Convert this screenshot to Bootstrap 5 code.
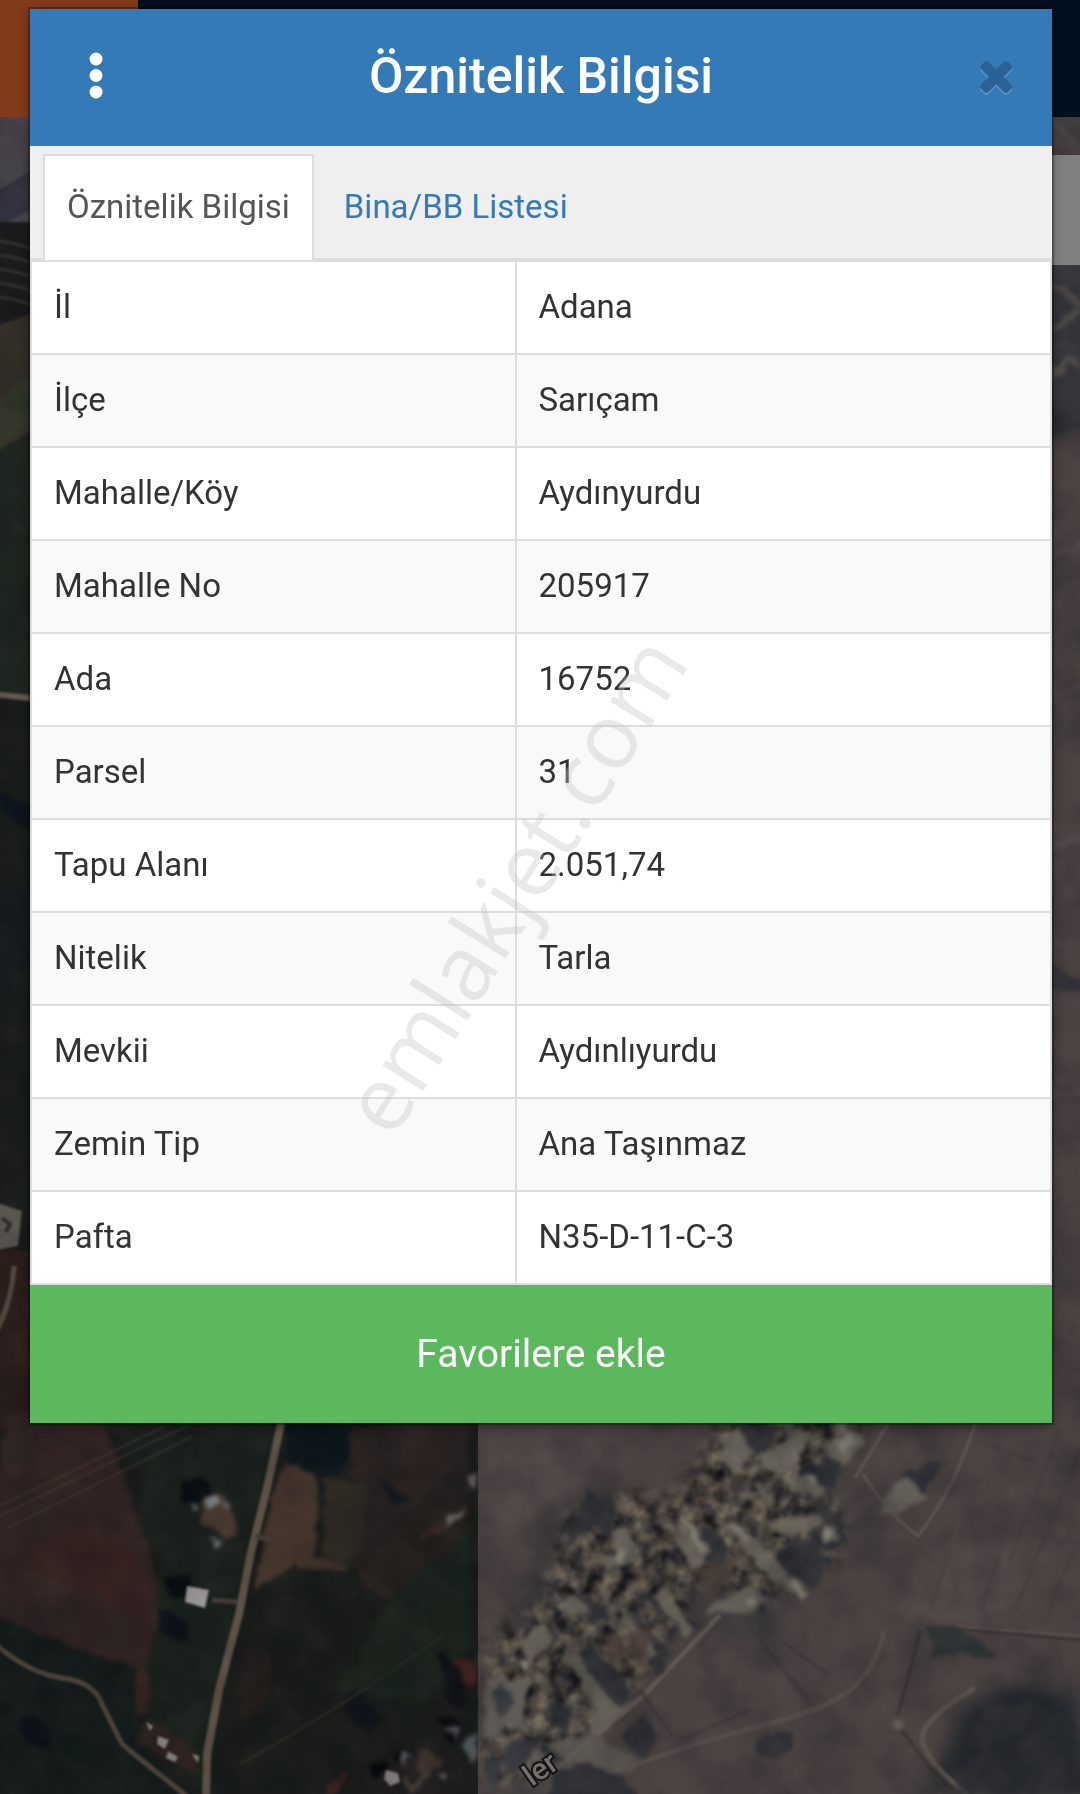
<!DOCTYPE html>
<html lang="tr">
<head>
<meta charset="utf-8">
<meta name="viewport" content="width=device-width, initial-scale=1">
<title>Öznitelik Bilgisi</title>
<link href="https://cdn.jsdelivr.net/npm/bootstrap@5.3.0/dist/css/bootstrap.min.css" rel="stylesheet">
<style>
  body { font-family: Roboto, "Liberation Sans", sans-serif; font-size: 33px; line-height: 47px; color: #333; background: #2a2625; min-height: 100vh; }
  .map-layer { z-index: 0; }
  .site-bar { height: 117px; background: #000f1e; z-index: 1; }
  .site-brand { width: 138px; background: #813a1b; }
  .map-tool { top: 155px; width: 60px; height: 110px; background: #808080; z-index: 1; }
  .info-shell { z-index: 2; padding: 9px 28px 0 30px; }
  .info-panel { box-shadow: 0 0 0 2px rgba(0,0,0,.25), 0 4px 10px rgba(0,0,0,.4); }
  .info-head { height: 137px; background: #347ab6; padding: 0 38px; }
  .info-head h1 { font-size: 50px; font-weight: 500; line-height: 60px; color: #fff; padding-bottom: 4px; }
  .head-btn { width: 40px; height: 60px; padding: 0; border: 0; }
  .tab-strip { background: #efefef; padding: 8px 13px 0; border-bottom: 2px solid #ddd; }
  .tab-strip .nav-link { color: #337ab7; border: 2px solid transparent; border-bottom: 0; border-radius: 0; padding: 27px 22px 30px; line-height: 47px; margin: 0 6px -2px 0; }
  .tab-strip .nav-link.active { color: #555; background: #fff; border-color: #ddd; }
  .info-table { color: #333; border: 2px solid #ddd; }
  .info-table th, .info-table td { border: 0 solid #ddd; border-bottom-width: 2px; padding: 21px 22px 23px; height: 93px; line-height: 47px; font-weight: 400; text-align: left; }
  .info-table th { width: 47.5%; border-right-width: 2px; }
  .info-table tr:nth-child(even) { background: #f9f9f9; }
  .fav-btn { background: #5cb85c; color: #fff; border: 0; border-radius: 0; font-size: 39px; line-height: 50px; padding: 44px 20px; }
  .fav-btn:hover { background: #4fa84f; color: #fff; }
  .stamp { z-index: 3; top: 49.2%; left: 47.4%; font-family: "Open Sans", "Noto Sans", sans-serif; font-size: 90px; line-height: 1; color: rgba(195,195,195,.36); transform: translate(-50%, -50%) rotate(-58deg); pointer-events: none; }
</style>
<script src="https://cdn.jsdelivr.net/npm/bootstrap@5.3.0/dist/js/bootstrap.bundle.min.js"></script>
</head>
<body class="position-relative overflow-hidden">

<svg class="map-layer position-absolute top-0 start-0 w-100 h-100" viewBox="0 0 1080 1794" preserveAspectRatio="xMidYMin slice" aria-hidden="true">
  <defs>
    <filter id="soft" x="-5%" y="-5%" width="110%" height="110%" color-interpolation-filters="sRGB">
      <feTurbulence type="fractalNoise" baseFrequency=".06" numOctaves="3" seed="3" result="n"/>
      <feDisplacementMap in="SourceGraphic" in2="n" scale="14" xChannelSelector="R" yChannelSelector="G"/>
      <feGaussianBlur stdDeviation="2"/>
    </filter>
    <filter id="lines" x="-5%" y="-5%" width="110%" height="110%" color-interpolation-filters="sRGB"><feGaussianBlur stdDeviation="1.3"/></filter>
    <filter id="haze" x="-30%" y="-30%" width="160%" height="160%" color-interpolation-filters="sRGB"><feGaussianBlur stdDeviation="8"/></filter>
    <filter id="town" x="-5%" y="-5%" width="110%" height="110%" color-interpolation-filters="sRGB">
      <feGaussianBlur in="SourceGraphic" stdDeviation="9" result="area"/>
      <feTurbulence type="fractalNoise" baseFrequency=".06" numOctaves="3" seed="9"/>
      <feColorMatrix values="1 0 0 0 -.21  .9 .05 0 0 -.21  .7 .05 .1 0 -.19  0 0 0 0 1"/>
      <feGaussianBlur stdDeviation="1.2"/>
      <feComposite in2="area" operator="in"/>
    </filter>
    <filter id="grain" x="0" y="0" width="100%" height="100%" color-interpolation-filters="sRGB">
      <feTurbulence type="fractalNoise" baseFrequency=".03" numOctaves="4" seed="6"/>
      <feColorMatrix values="0 0 0 0 .42  0 0 0 0 .38  0 0 0 0 .36  1.6 0 0 0 -.6"/>
    </filter>
    <filter id="shade" x="0" y="0" width="100%" height="100%" color-interpolation-filters="sRGB">
      <feTurbulence type="fractalNoise" baseFrequency=".02" numOctaves="4" seed="12"/>
      <feColorMatrix values="0 0 0 0 .04  0 0 0 0 .06  0 0 0 0 .09  1.6 0 0 0 -.65"/>
    </filter>
  </defs>
  <rect width="1080" height="1794" fill="#181c1a"/>
  <rect x="478" width="602" height="1794" fill="#4a4140"/>

  <!-- strip left of the panel -->
  <g filter="url(#lines)">
    <path d="M-9 110h49v117H-9z" fill="#47434a"/>
    <path d="M-9 195l49-30v40L-9 230z" fill="#30323e"/>
    <path d="M-9 222h49v85L-9 335z" fill="#1b1a1c"/>
    <path d="M-9 240q25 2 49 12M-9 254q25 2 49 12M-9 268q25 2 49 12M-9 282q25 2 49 12M-9 296q25 2 49 12" stroke="#34312f" stroke-width="3" fill="none"/>
    <path d="M-9 328l49-18v150L-9 530z" fill="#353027"/>
    <path d="M-9 407l49-39v40L-9 460z" fill="#32372a"/>
    <path d="M-9 455l49-30v270H-9z" fill="#1d251f"/>
    <path d="M-9 694l49 5" stroke="#65594c" stroke-width="6"/>
    <path d="M-9 786l49 29v20L-9 806z" fill="#0f161d"/>
    <path d="M-9 910q25-35 49-10t-49 110z" fill="#151b1f"/>
    <path d="M-9 1250h49v180H-9z" fill="#2a1e1b"/>
    <path d="M-9 1201l31 10-4 35-27 5z" fill="#5b5751"/>
    <path d="M2 1218l8 6-4 8" stroke="#2b2c2c" stroke-width="4" fill="none"/>
    <path d="M14 1266q-2 35-18 66" stroke="#544a3f" stroke-width="5" fill="none"/>
  </g>

  <!-- strip right of the panel -->
  <g filter="url(#soft)">
    <path d="M1045 265h50v160l-50 14z" fill="#34343a"/>
    <path d="M1052 120l28 30M1050 285l30 18M1050 330l30-20M1050 380q14-28 30-14" stroke="#524d4c" stroke-width="6" fill="none"/>
    <path d="M1045 960q14 14 50 20v18l-50-14z" fill="#303138"/>
    <path d="M1045 560l50-22M1045 700l50-20M1045 850l50-18M1045 1100l50-15" stroke="#52484a" stroke-width="7"/>
  </g>

  <!-- dark farmland -->
  <g filter="url(#soft)">
    <path d="M10 1414h90l18 48 30 84 12 40-5 80-7 47-11 2-2-46-150-9v-120z" fill="#312422"/>
    <path d="M30 1540q50-18 100 10l25 35-5 45q-60-50-120-60z" fill="#371f20" opacity=".6"/>
    <path d="M-15 1614l149 54-4 50 60 96H-15z" fill="#141b1a"/>
    <path d="M100 1414h176l-30 140-12 70-30 170-50-60-8-70 14-60-2-50-20-80z" fill="#1a211c"/>
    <path d="M285 1414h90l-45 70-10 10-28-8z" fill="#0c161b"/>
    <path d="M350 1430l118-16v80l-60 100-55 10 5-50z" fill="#292220"/>
    <path d="M285 1464l30 5 5 36-6 50 38 10-10 6-52-4-32 20-6 12 15-80z" fill="#44342b"/>
    <path d="M325 1480l44 2-12 88-35-10 2-30z" fill="#2e2922"/>
    <path d="M345 1560l110-90 13 20v50l-70 60z" fill="#231f1c"/>
    <path d="M254 1600l40-33 60 10 40 30-10 60-80 40-78 20z" fill="#181c19"/>
    <path d="M240 1650q40-20 25 60l-25 10z" fill="#261e1a" opacity=".8"/>
    <path d="M390 1600l80-70v120l-42 50-90-6z" fill="#1a221b"/>
    <path d="M374 1478q20 0 36 24l-12 6z" fill="#15191f"/>
    <ellipse cx="34" cy="1730" rx="20" ry="12" fill="#0c0f17" transform="rotate(40 34 1730)"/>
    <ellipse cx="172" cy="1626" rx="18" ry="11" fill="#0d1118" transform="rotate(30 172 1626)"/>
    <ellipse cx="362" cy="1711" rx="24" ry="11" fill="#10141a" transform="rotate(50 362 1711)"/>
  </g>
  <g filter="url(#lines)" fill="none">
    <path d="M0 1516l186-90M0 1506l165-80M8 1528l185-92" stroke="#463834" stroke-width="2" opacity=".6"/>
    <path d="M240 1764q100-55 205-130" stroke="#262720" stroke-width="3"/>
    <path d="M283 1414l-16 74-16 64-12 62-20 76-12 64-1 50" stroke="#5f5248" stroke-width="8"/>
    <path d="M-5 1644q35 30 67 34t40 26l20 40q30 25 70 56" stroke="#4b433b" stroke-width="5"/>
    <path d="M212 1600l26 2M256 1536l16 4" stroke="#453c37" stroke-width="5"/>
  </g>
  <g filter="url(#soft)">
    <path d="M182 1480l20-2 12 14-20 15-12-6z" fill="#0a0d12"/>
    <path d="M205 1497l18-5 10 20 5 22-14 3-22-17z" fill="#4c3c31"/>
    <path d="M205 1493l13 1 2 11-10 4zM190 1505l8 2-4 5zM209 1539l11 1-4 9zM224 1499l7 3-4 9z" fill="#7b7f80"/>
    <path d="M162 1576l30-2-6 20-12 4z" fill="#090c10"/>
    <path d="M140 1722l24 2 32 28 4 18-14-2-50-26z" fill="#2c211d"/>
    <path d="M440 1494l28-26 8 22-30 16z" fill="#23201f"/>
    <path d="M442 1519l20-14-2 12-16 12zM468 1475l8-4 0 14-5 8z" fill="#6a6561"/>
    <path d="M425 1535l20-18-5 14-24 15z" fill="#38261f"/>
    <path d="M448 1664l20-6 8 4v28l-12-6z" fill="#42201e"/>
    <path d="M436 1650l12 0 20 40-4 20-20-10z" fill="#0f1116"/>
    <path d="M330 1784l20-14-14 24-14 10z" fill="#3f2020"/>
    <path d="M464 1750l12-20v26l-6 7z" fill="#515a5d"/>
    <path d="M365 1770l40-20 24-14 38 26-2 42h-90z" fill="#1f1c1d"/>
    <path d="M420 1752l14 0 6 12-16 12-8-8z" fill="#3d3029"/>
    <path d="M370 1764l14-6 4 12-10 8zM400 1744l12 4-4 16-12-2zM440 1720l14-6 8 20-12 8z" fill="#07090d"/>
    <path d="M446 1726l13 3-5 10zM403 1750l9 3-7 16zM434 1773l12 0-4 7z" fill="#5c5d65"/>
    <path d="M402 1776l12 18M412 1790l18-18" stroke="#52483e" stroke-width="3"/>
  </g>
  <g filter="url(#lines)">
    <path d="M187 1586l22 4-4 18-20-6z" fill="#a09c9b"/>
    <path d="M146 1722l7 4-3 5zM158 1736l11 4-4 9-8-5zM168 1751l10 6-3 5-9-4zM192 1754l7 2-1 7z" fill="#85827f"/>
    <path d="M386 1770l12 3 2 9-10 4-6-7z" fill="#7b7876"/>
  </g>

  <!-- brown farmland with the village -->
  <g filter="url(#haze)">
    <path d="M555 1500l50-14 20 40 50 10 90 20 25 40-20 50-80-20-100 90-60 60-24-90 10-90z" fill="#3d3a3b"/>
    <path d="M720 1414h160l-40 70 6 60-50 20-70-60z" fill="#403e3e"/>
    <path d="M950 1740l30-50 60-5 40 10v99H930z" fill="#282c31"/>
    <path d="M492 1650l48 10 60 90-20 44h-88z" fill="#4c4846"/>
    <path d="M920 1560l90-20 20 60-60 30-70-10zM490 1440h120l-40 50-80 60z" fill="#524847"/>
  </g>
  <path filter="url(#town)" opacity=".7" d="M720 1414h145l-25 54-24 14 30 24-10 60-40 20-30 22-60-28-60 94-70 70-50 40h-40v-140l52-40 30-92 60-20 40 4 30-30z"/>
  <g filter="url(#lines)" fill="none">
    <path d="M978 1414q-20 70-60 122-30-22-55-62M894 1414l-39 64" stroke="#5e5351" stroke-width="3"/>
    <path d="M884 1630q-5 30-25 52t-70 36l-90 25-120 40" stroke="#564c49" stroke-width="5"/>
    <path d="M720 1615l-76 80-84 70" stroke="#5f5652" stroke-width="5"/>
    <path d="M1080 1640l-130-12M895 1725q20-70 25-95M900 1728l50 66" stroke="#393433" stroke-width="3"/>
    <path d="M1080 1636l-130-10" stroke="#5b5250" stroke-width="2"/>
    <path d="M975 1688q-60 35-52 56 10 25 45 50" stroke="#5c514c" stroke-width="5"/>
    <path d="M740 1615l72 90M640 1690l32 45M780 1640l50 36M680 1740l70-30" stroke="#3f393a" stroke-width="3"/>
    <path d="M1080 1450l-65 160M1060 1430l-50 130M1078 1540l-30 70M975 1440l60 22" stroke="#433d3d" stroke-width="3"/>
    <path d="M960 1520l-30 90M1020 1500l-40 110" stroke="#4d4443" stroke-width="5"/>
  </g>
  <g filter="url(#soft)">
    <path d="M925 1626l28-2 45 28-15 6-50-3z" fill="#2c3233"/>
    <path d="M955 1760l20-50 40-16 50 6 30 94H960z" fill="#23282e" opacity=".7"/>
    <ellipse cx="775" cy="1744" rx="20" ry="13" fill="#303037" transform="rotate(-15 775 1744)"/>
    <g fill="#2b2d34" opacity=".85">
      <path d="M738 1424h50l-30 34-10-4zM805 1470l35-16-4 30-30 20zM700 1524l30 20-8 40-20-30zM820 1500l26 25-8 26-36-20zM770 1550l44-12 20 20-20 32-36-25z"/>
      <path d="M590 1490l24 12 4 40-24-14-36 20zM575 1600l14-4 18 22-14 12zM612 1600l60 54-12 18zM590 1640l40 50-12 28-40-50zM640 1586l60 38-8 14-44-30zM900 1474l40-14-20 40-18 16z"/>
      <path d="M540 1630l22 6-10 16-20-10zM552 1700l24 6-8 28-20-14zM620 1730l24-14 14 24-20 22zM540 1746l24-6 4 20-22 10z"/>
    </g>
    <g fill="#6c675d" opacity=".85">
      <path d="M725 1434l18-6 10 24-18 26-14-14zM764 1456l36-28 12 12-30 34-20-4zM828 1440l24-12 10 14-18 24-16-6z"/>
      <path d="M675 1518l10-5 28 38-14 16-20-20zM724 1524l10-4 60 58-4 16-30-24zM785 1580l12-3 12 18-10 4zM715 1600l40-10 12 10-14 14-44-2z"/>
      <path d="M654 1594l10-2 32 40-10 8zM612 1606l12 2 34 46-8 6zM566 1658l8-6 44 56-14 10zM562 1595l14-4 12 22-14 6z"/>
      <path d="M612 1530l12-3 12 18-8 16-22 10-4-10 14-10zM892 1484l16-6 22 18-26 16-26 4zM822 1532l12-4 4 10-10 6zM750 1484l8-2 18 20-6 4z"/>
      <path d="M795 1482l14-6 18 12-12 10zM764 1522l56-8 4 12-36 10zM590 1714l40-14-20 28-20 14z"/>
      <path d="M893 1716l14 4-6 10-10-4zM520 1640l20-15 14 14-22 22z"/>
    </g>
    <path d="M545 1742l50-8 44 28-8 10-70-10z" fill="#5f5a54" opacity=".8"/>
    <g fill="#858074">
      <path d="M680 1516l6 2 24 34-6 6zM788 1582l8-2 8 14-6 4zM834 1440l16-8 4 10-14 12zM806 1478l8-2 4 6-8 4zM728 1524l6 0 12 14-4 3zM616 1552l8-2-2 12-7 2zM746 1598l12 2-4 8-8-2zM584 1718l6-1-2 8zM824 1533l8-1 1 8-6 2z"/>
    </g>
    <g fill="#4e403a" opacity=".8">
      <path d="M700 1570l38-12-22 44-16-12zM604 1628l20 10-4 30-14-14zM730 1476l16 4-8 14-10-6zM640 1620l10 10-8 40-20-18z"/>
    </g>
    <path d="M484 1700l14-30 10 10 24-10-8 40 10 30-20-14-30 16z" fill="#625c57"/>
    <path d="M492 1690l10-8 12 20-14 18zM510 1740l20 6-6 28-20-6zM488 1752l12 10-6 30-8-10z" fill="#373b42"/>
    <path d="M520 1655l10 6-6 8zM506 1724l10 2-4 8z" fill="#8c887e"/>
    <path d="M555 1775l30-14 40 20 20 23H545z" fill="#292c32"/>
  </g>
  <rect width="478" height="1794" filter="url(#grain)" opacity=".12"/>
  <rect x="478" width="602" height="1794" filter="url(#grain)" opacity=".22"/>
  <rect width="1080" height="1794" filter="url(#shade)" opacity=".3"/>
  <text x="532" y="1787" transform="rotate(-35 532 1787)" font-family="Roboto, sans-serif" font-size="30" font-weight="500" fill="#74706e" stroke="#151313" stroke-width="4" paint-order="stroke">ler</text>
</svg>

<div class="site-bar position-absolute top-0 start-0 w-100 d-flex"><div class="site-brand"></div></div>
<div class="map-tool position-absolute end-0"></div>

<main class="info-shell position-relative">
  <section class="info-panel bg-white" aria-labelledby="panelTitle">
    <header class="info-head d-flex align-items-center justify-content-between">
      <button type="button" class="head-btn btn d-flex" aria-label="Menü">
        <svg width="40" height="60" viewBox="0 0 40 60" fill="#fff" aria-hidden="true"><circle cx="28" cy="11" r="6.5"/><circle cx="28" cy="27.500" r="6.5"/><circle cx="28" cy="44" r="6.5"/></svg>
      </button>
      <h1 id="panelTitle" class="m-0">Öznitelik Bilgisi</h1>
      <button type="button" class="head-btn btn d-flex" aria-label="Kapat">
        <svg width="40" height="60" viewBox="0 0 40 60" aria-hidden="true">
          <defs><path id="cross" d="M1490 1322q0 40-28 68l-136 136q-28 28-68 28t-68-28l-294-294-294 294q-28 28-68 28t-68-28l-136-136q-28-28-28-68t28-68l294-294-294-294q-28-28-28-68t28-68l136-136q28-28 68-28t68 28l294 294 294-294q28-28 68-28t68 28l136 136q28 28 28 68t-28 68l-294 294 294 294q28 28 28 68z"/></defs>
          <use href="#cross" transform="translate(-2 5) scale(.027)" fill="#5b95cb"/>
          <use href="#cross" transform="translate(-2 3) scale(.027)" fill="#2a6295"/>
        </svg>
      </button>
    </header>

    <ul class="tab-strip nav flex-nowrap" role="tablist">
      <li class="nav-item" role="presentation"><a class="nav-link active" href="#oznitelik" role="tab" aria-selected="true">Öznitelik Bilgisi</a></li>
      <li class="nav-item" role="presentation"><a class="nav-link" href="#bina" role="tab" aria-selected="false">Bina/BB Listesi</a></li>
    </ul>

    <table id="oznitelik" class="info-table w-100">
      <tbody>
        <tr><th scope="row">İl</th><td>Adana</td></tr>
        <tr><th scope="row">İlçe</th><td>Sarıçam</td></tr>
        <tr><th scope="row">Mahalle/Köy</th><td>Aydınyurdu</td></tr>
        <tr><th scope="row">Mahalle No</th><td>205917</td></tr>
        <tr><th scope="row">Ada</th><td>16752</td></tr>
        <tr><th scope="row">Parsel</th><td>31</td></tr>
        <tr><th scope="row">Tapu Alanı</th><td>2.051,74</td></tr>
        <tr><th scope="row">Nitelik</th><td>Tarla</td></tr>
        <tr><th scope="row">Mevkii</th><td>Aydınlıyurdu</td></tr>
        <tr><th scope="row">Zemin Tip</th><td>Ana Taşınmaz</td></tr>
        <tr><th scope="row">Pafta</th><td>N35-D-11-C-3</td></tr>
      </tbody>
    </table>

    <button type="button" class="fav-btn btn w-100 d-block">Favorilere ekle</button>
  </section>
</main>

<div class="stamp position-absolute text-nowrap">emlakjet.com</div>
</body>
</html>
